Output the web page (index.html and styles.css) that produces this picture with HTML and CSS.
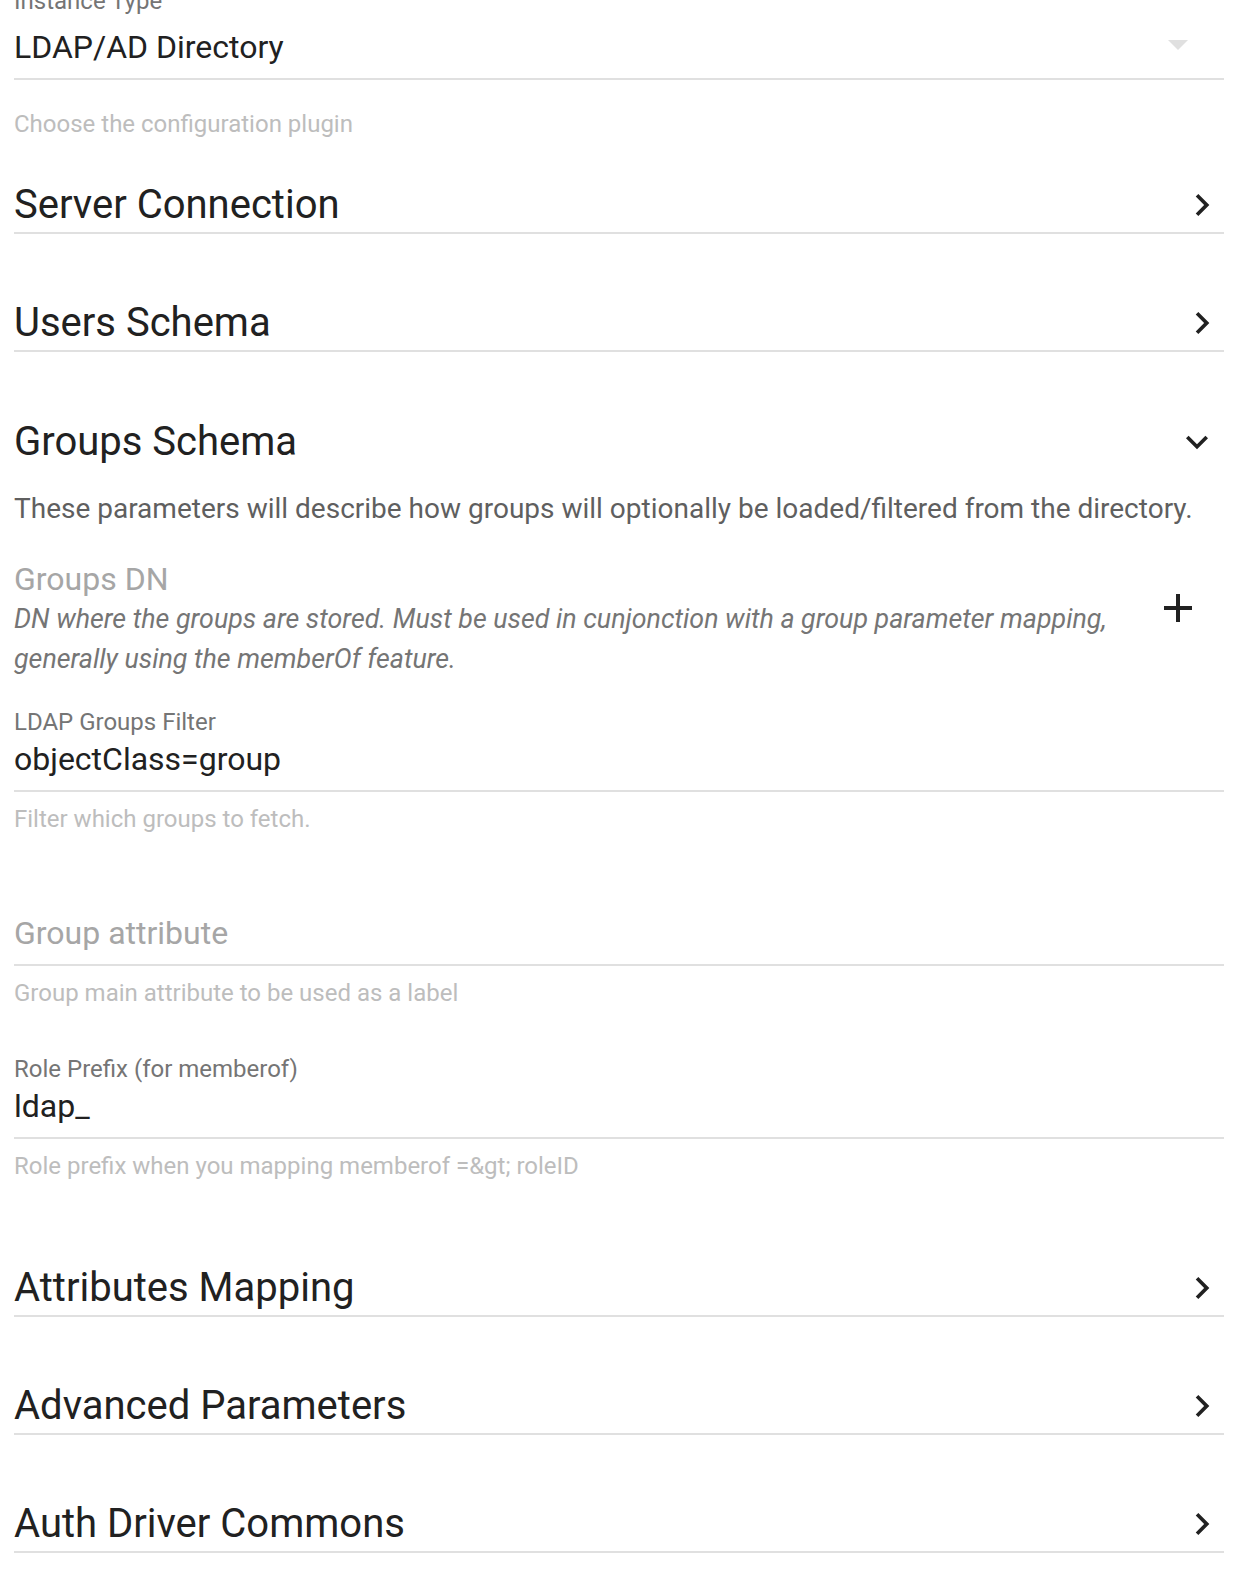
FILE: index.html
```html
<!DOCTYPE html>
<html>
<head>
<meta charset="utf-8">
<link rel="stylesheet" href="styles.css">
</head>
<body>
<div class="page">
  <div class="select-field">
    <div class="label">Instance Type</div>
    <div class="select-row">
      <span class="value">LDAP/AD Directory</span>
      <svg class="drop" viewBox="0 0 24 24"><path d="M7 10l5 5 5-5z"/></svg>
    </div>
    <div class="helper helper-select">Choose the configuration plugin</div>
  </div>

  <div class="section-head first">
    <span class="title">Server Connection</span>
    <svg class="chev" viewBox="0 0 24 24"><path d="M10 6L8.59 7.41 13.17 12l-4.58 4.59L10 18l6-6z"/></svg>
  </div>

  <div class="section-head">
    <span class="title">Users Schema</span>
    <svg class="chev" viewBox="0 0 24 24"><path d="M10 6L8.59 7.41 13.17 12l-4.58 4.59L10 18l6-6z"/></svg>
  </div>

  <div class="section-head open">
    <span class="title">Groups Schema</span>
    <svg class="chev chev-down" viewBox="0 0 24 24"><path d="M16.59 8.59L12 13.17 7.41 8.59 6 10l6 6 6-6z"/></svg>
  </div>
  <div class="section-body">
    <div class="desc">These parameters will describe how groups will optionally be loaded/filtered from the directory.</div>

    <div class="replicable">
      <div class="rep-text">
        <div class="rep-label">Groups DN</div>
        <div class="rep-desc">DN where the groups are stored. Must be used in cunjonction with a group parameter mapping, generally using the memberOf feature.</div>
      </div>
      <svg class="add" viewBox="0 0 24 24"><path d="M19 13h-6v6h-2v-6H5v-2h6V5h2v6h6v2z"/></svg>
    </div>

    <div class="field field-first">
      <div class="label">LDAP Groups Filter</div>
      <div class="input-row"><span class="value">objectClass=group</span></div>
      <div class="helper">Filter which groups to fetch.</div>
    </div>

    <div class="field">
      <div class="label"></div>
      <div class="input-row"><span class="value placeholder">Group attribute</span></div>
      <div class="helper">Group main attribute to be used as a label</div>
    </div>

    <div class="field">
      <div class="label">Role Prefix (for memberof)</div>
      <div class="input-row"><span class="value">ldap_</span></div>
      <div class="helper">Role prefix when you mapping memberof =&amp;gt; roleID</div>
    </div>
  </div>

  <div class="section-head after-body">
    <span class="title">Attributes Mapping</span>
    <svg class="chev" viewBox="0 0 24 24"><path d="M10 6L8.59 7.41 13.17 12l-4.58 4.59L10 18l6-6z"/></svg>
  </div>

  <div class="section-head">
    <span class="title">Advanced Parameters</span>
    <svg class="chev" viewBox="0 0 24 24"><path d="M10 6L8.59 7.41 13.17 12l-4.58 4.59L10 18l6-6z"/></svg>
  </div>

  <div class="section-head">
    <span class="title">Auth Driver Commons</span>
    <svg class="chev" viewBox="0 0 24 24"><path d="M10 6L8.59 7.41 13.17 12l-4.58 4.59L10 18l6-6z"/></svg>
  </div>
</div>
</body>
</html>
```

FILE: styles.css
```css
html, body {
  margin: 0;
  padding: 0;
  background: #ffffff;
}

body {
  font-family: Roboto, "Noto Sans", Arial, sans-serif;
  color: #212121;
  overflow: hidden;
}

.page {
  margin-top: -10px;
  padding: 0 16px 0 14px;
}

.label {
  font-size: 24px;
  line-height: 22px;
  height: 22px;
  color: #757575;
}

.value {
  font-size: 32px;
  line-height: 44px;
  color: #212121;
}

.value.placeholder {
  color: #a6a6a6;
}

.helper {
  font-size: 24px;
  line-height: 22px;
  color: #bdbdbd;
  margin-top: 16px;
}

/* select */
.select-row {
  margin-top: 13px;
  display: flex;
  align-items: center;
  justify-content: space-between;
  height: 44px;
  padding-bottom: 9px;
  border-bottom: 2px solid #e0e0e0;
}

.drop {
  width: 48px;
  height: 48px;
  fill: #e0e0e0;
  margin-right: 22px;
  margin-top: -7px;
  flex: none;
}

.helper-select {
  margin-top: 33px;
}

/* section headers */
.section-head {
  display: flex;
  align-items: center;
  justify-content: space-between;
  height: 44px;
  padding-bottom: 5px;
  border-bottom: 2px solid #e0e0e0;
  margin-top: 67px;
}

.section-head.first {
  margin-top: 48px;
}

.section-head.open {
  border-bottom-color: transparent;
  margin-top: 68px;
}

.title {
  font-size: 40px;
  line-height: 44px;
  color: #212121;
}

.chev {
  width: 44px;
  height: 44px;
  fill: #212121;
  flex: none;
}

.chev-down {
  margin-right: 5px;
}

/* expanded body */
.desc {
  margin-top: 18px;
  font-size: 28px;
  line-height: 40px;
  color: #5f5f5f;
}

.replicable {
  margin-top: 30px;
  display: flex;
  align-items: flex-start;
  justify-content: space-between;
}

.rep-text {
  flex: 1;
  padding-right: 30px;
}

.rep-label {
  font-size: 32px;
  line-height: 40px;
  color: #a6a6a6;
}

.rep-desc {
  margin-top: 0;
  font-size: 26.8px;
  line-height: 40px;
  font-style: italic;
  color: #757575;
}

.add {
  width: 48px;
  height: 48px;
  fill: #212121;
  margin-top: 25px;
  margin-right: 22px;
  flex: none;
}

.field {
  margin-top: 55px;
}

.field-first {
  margin-top: 32px;
}

.field-first + .field + .field {
  margin-top: 54px;
}

.input-row {
  margin-top: 4px;
  height: 44px;
  padding-bottom: 9px;
  border-bottom: 2px solid #e0e0e0;
}

.section-head.after-body {
  margin-top: 89px;
}
```
